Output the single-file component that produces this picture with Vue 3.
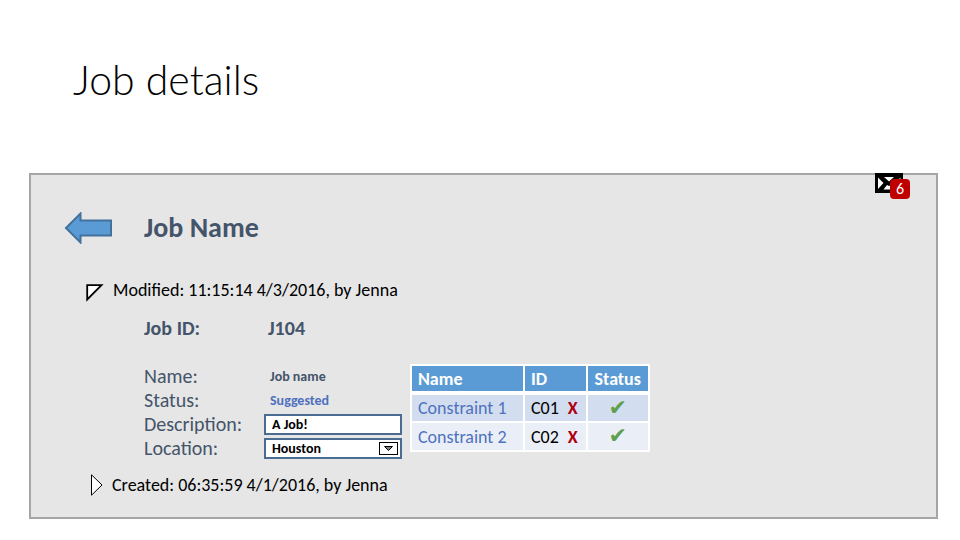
<template>
  <main class="page">
    <h1 class="page-title">Job details</h1>

    <section class="panel">
      <button class="mail" type="button" aria-label="Messages">
        <svg width="28" height="20" viewBox="0 0 28 20">
          <rect width="28" height="20" fill="#000" />
          <path d="M3 4.5 L8.5 10 L3 16 Z M9 4 H19 L14 8.5 Z M8.5 16.5 L12 12 L14 13 L16 12 L19.5 16.5 Z M25.5 4.5 L20 10 L25.5 16 Z" fill="#fff" />
        </svg>
        <span class="badge">{{ messages }}</span>
      </button>

      <header class="job-header">
        <button class="back" type="button" aria-label="Back">
          <svg width="48" height="32" viewBox="0 0 48 32">
            <path d="M2 16 L16.5 1.5 V8.5 H47 V23.5 H16.5 V30.5 Z" fill="#5b9bd5" stroke="#41719c" stroke-width="2" />
          </svg>
        </button>
        <h2 class="job-name">Job Name</h2>
      </header>

      <button class="event modified" type="button" @click="open = !open">
        <svg width="18" height="18" viewBox="0 0 18 18">
          <path d="M1.2 1.2 H15.5 L1.2 15.5 Z" fill="#fff" stroke="#000" stroke-width="1.8" />
        </svg>
        <span>Modified: 11:15:14 4/3/2016, by Jenna</span>
      </button>

      <div v-if="open" class="details">
        <dl class="job-id">
          <dt>Job ID:</dt>
          <dd>J104</dd>
        </dl>

        <div class="columns">
          <form class="fields" @submit.prevent>
            <span class="label">Name:</span>
            <span class="value">Job name</span>
            <span class="label">Status:</span>
            <span class="value suggested">Suggested</span>
            <label class="label" for="description">Description:</label>
            <input id="description" v-model="description" class="control" type="text" />
            <label class="label" for="location">Location:</label>
            <div class="select-wrap">
              <select id="location" v-model="location" class="control">
                <option>Houston</option>
              </select>
              <svg class="arrow" width="19" height="13" viewBox="0 0 19 13">
                <rect x="0.5" y="0.5" width="18" height="12" fill="#fff" stroke="#000" />
                <path d="M5.5 4.5 H13.5 L9.5 8.5 Z" fill="#7f7f7f" stroke="#000" />
              </svg>
            </div>
          </form>

          <table class="constraints">
            <thead>
              <tr>
                <th class="name">Name</th>
                <th>ID</th>
                <th class="status">Status</th>
              </tr>
            </thead>
            <tbody>
              <tr v-for="item in constraints" :key="item.id">
                <td class="name">{{ item.name }}</td>
                <td>
                  <span class="id-cell">{{ item.id }} <button class="remove" type="button">X</button></span>
                </td>
                <td class="status"><span class="check">✔</span></td>
              </tr>
            </tbody>
          </table>
        </div>
      </div>

      <button class="event created" type="button">
        <svg width="12" height="22" viewBox="0 0 12 22">
          <path d="M0.5 0.8 L11 11 L0.5 21.2 Z" fill="#fff" stroke="#000" />
        </svg>
        <span>Created: 06:35:59 4/1/2016, by Jenna</span>
      </button>
    </section>
  </main>
</template>

<script setup>
import { ref } from 'vue';

const messages = ref(6);
const open = ref(true);
const description = ref('A Job!');
const location = ref('Houston');

const constraints = ref([
  { id: 'C01', name: 'Constraint 1' },
  { id: 'C02', name: 'Constraint 2' },
]);
</script>

<style>
body {
  margin: 0;
  background: #fff;
}
</style>

<style scoped>
.page {
  font-family: Carlito, Lato, 'Open Sans', sans-serif;
  padding: 52px 22px 20px 29px;
  color: #000;
}

button {
  font-family: inherit;
  padding: 0;
  border: none;
  background: none;
  color: inherit;
  cursor: pointer;
}

svg {
  display: block;
  flex: none;
}

.page-title {
  margin: 0 0 65px 44px;
  font-family: Lato, 'Open Sans', sans-serif;
  font-size: 41px;
  line-height: 56px;
  font-weight: 300;
}

.panel {
  position: relative;
  padding: 37px 32px 20px;
  border: 2px solid #a5a5a5;
  background: #e6e6e6;
}

/* Mail icon */
.mail {
  position: absolute;
  top: -2px;
  right: 33px;
}

.badge {
  position: absolute;
  top: 6px;
  left: 15px;
  width: 20px;
  border-radius: 4px;
  background: #c00000;
  color: #fff;
  font-size: 16px;
  line-height: 20px;
  text-align: center;
}

/* Job header */
.job-header {
  display: flex;
  align-items: center;
  gap: 32px;
  padding-left: 1px;
}

.job-name {
  margin: 0;
  color: #44546a;
  font-size: 28px;
  line-height: 32px;
}

/* Events */
.event {
  display: flex;
  align-items: center;
  gap: 9px;
  font-size: 18px;
  line-height: 24px;
}

.modified {
  align-items: flex-end;
  margin: 34px 0 0 23px;
}

.created {
  margin: 13px 0 0 28px;
}

/* Details */
.details {
  padding-left: 81px;
  color: #44546a;
}

.job-id {
  display: flex;
  margin: 14px 0 24px;
  font-size: 20px;
  line-height: 24px;
  font-weight: bold;
}

.job-id dt {
  width: 124px;
}

.job-id dd {
  margin: 0;
}

.columns {
  display: flex;
  align-items: flex-start;
  gap: 8px;
}

.fields {
  display: grid;
  grid-template-columns: 120px 138px;
  grid-auto-rows: 24px;
  align-items: center;
}

.label {
  font-size: 20px;
}

.value {
  padding-left: 6px;
  font-size: 14px;
  font-weight: bold;
}

.suggested {
  color: #4f71be;
}

.control {
  box-sizing: border-box;
  width: 100%;
  height: 21px;
  padding: 0 6px;
  border: 2px solid #4a6c91;
  border-radius: 0;
  background: #fff;
  color: #000;
  font-family: inherit;
  font-size: 14px;
  font-weight: bold;
  appearance: none;
}

.select-wrap {
  position: relative;
  display: flex;
}

.arrow {
  position: absolute;
  top: 4px;
  right: 4px;
  pointer-events: none;
}

/* Constraints table */
.constraints {
  width: 240px;
  table-layout: fixed;
  border-collapse: collapse;
  background: #fff;
  font-size: 18px;
}

.constraints th,
.constraints td {
  box-sizing: border-box;
  height: 29px;
  padding: 0 6px;
  border: 2px solid #fff;
  line-height: 24px;
  text-align: left;
  white-space: nowrap;
}

.constraints th {
  height: 28px;
  border-bottom-width: 4px;
  background: #5b9bd5;
  color: #fff;
}

.constraints th.name {
  width: 113px;
}

.constraints td {
  background: #eaeff7;
  color: #000;
}

.constraints tr:nth-child(odd) td {
  background: #d2deef;
}

.constraints td.name {
  color: #4f71be;
}

.constraints .status {
  padding: 0 4px;
  text-align: center;
}

.id-cell {
  display: flex;
  align-items: center;
  gap: 9px;
}

.remove {
  color: #b00010;
  font-size: 18px;
  font-weight: bold;
}

.check {
  color: #5fa04e;
  font-family: 'DejaVu Sans', sans-serif;
  font-size: 22px;
}
</style>
